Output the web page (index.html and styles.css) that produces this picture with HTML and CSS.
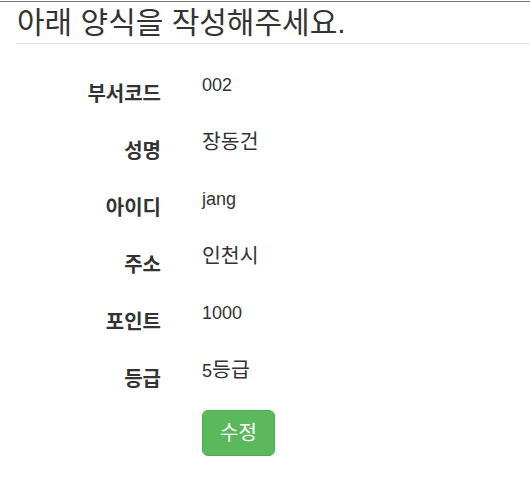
FILE: index.html
```html
<!DOCTYPE html>
<html lang="ko">
<head>
<meta charset="utf-8">
<link rel="stylesheet" href="styles.css">
</head>
<body>
<div class="page">
  <h2 class="title">아래 양식을 작성해주세요.</h2>
  <form class="form">
    <div class="row"><label class="label">부서코드</label><div class="value">002</div></div>
    <div class="row"><label class="label">성명</label><div class="value"><span class="ko">장동건</span></div></div>
    <div class="row"><label class="label">아이디</label><div class="value">jang</div></div>
    <div class="row"><label class="label">주소</label><div class="value"><span class="ko">인천시</span></div></div>
    <div class="row"><label class="label">포인트</label><div class="value">1000</div></div>
    <div class="row"><label class="label">등급</label><div class="value">5<span class="ko">등급</span></div></div>
    <div class="actions"><button type="button" class="btn">수정</button></div>
  </form>
</div>
</body>
</html>
```
FILE: styles.css
```css
html, body {
  margin: 0;
  padding: 0;
  background: #fff;
}
body {
  border-top: 1px solid #7a7a7a;
  margin-top: 1px;
  font-family: "Liberation Sans", "Noto Sans CJK KR", sans-serif;
  color: #333;
}
.page {
  padding-left: 16px;
}
.title {
  margin: 0;
  padding: 5px 0 0 1px;
  height: 36px;
  font-size: 30px;
  font-weight: normal;
  line-height: 32px;
  border-bottom: 1px solid #e5e5e5;
}
.form {
  margin: 0;
  padding-top: 22px;
}
.row {
  display: flex;
  height: 57px;
}
.label {
  width: 145px;
  text-align: right;
  font-weight: bold;
  font-size: 20px;
  line-height: 22px;
  padding-top: 17px;
  box-sizing: border-box;
}
.value {
  margin-left: 41px;
  font-size: 18px;
  line-height: 22px;
  padding-top: 8px;
}
.ko {
  font-size: 20.5px;
}
.actions {
  padding-left: 186px;
  padding-top: 2px;
}
.btn {
  font-family: "Liberation Sans", "Noto Sans CJK KR", sans-serif;
  background: #5cb85c;
  border: 1px solid #4cae4c;
  color: #fff;
  font-size: 20px;
  line-height: 24px;
  padding: 10px 17px;
  border-radius: 6px;
}
```
